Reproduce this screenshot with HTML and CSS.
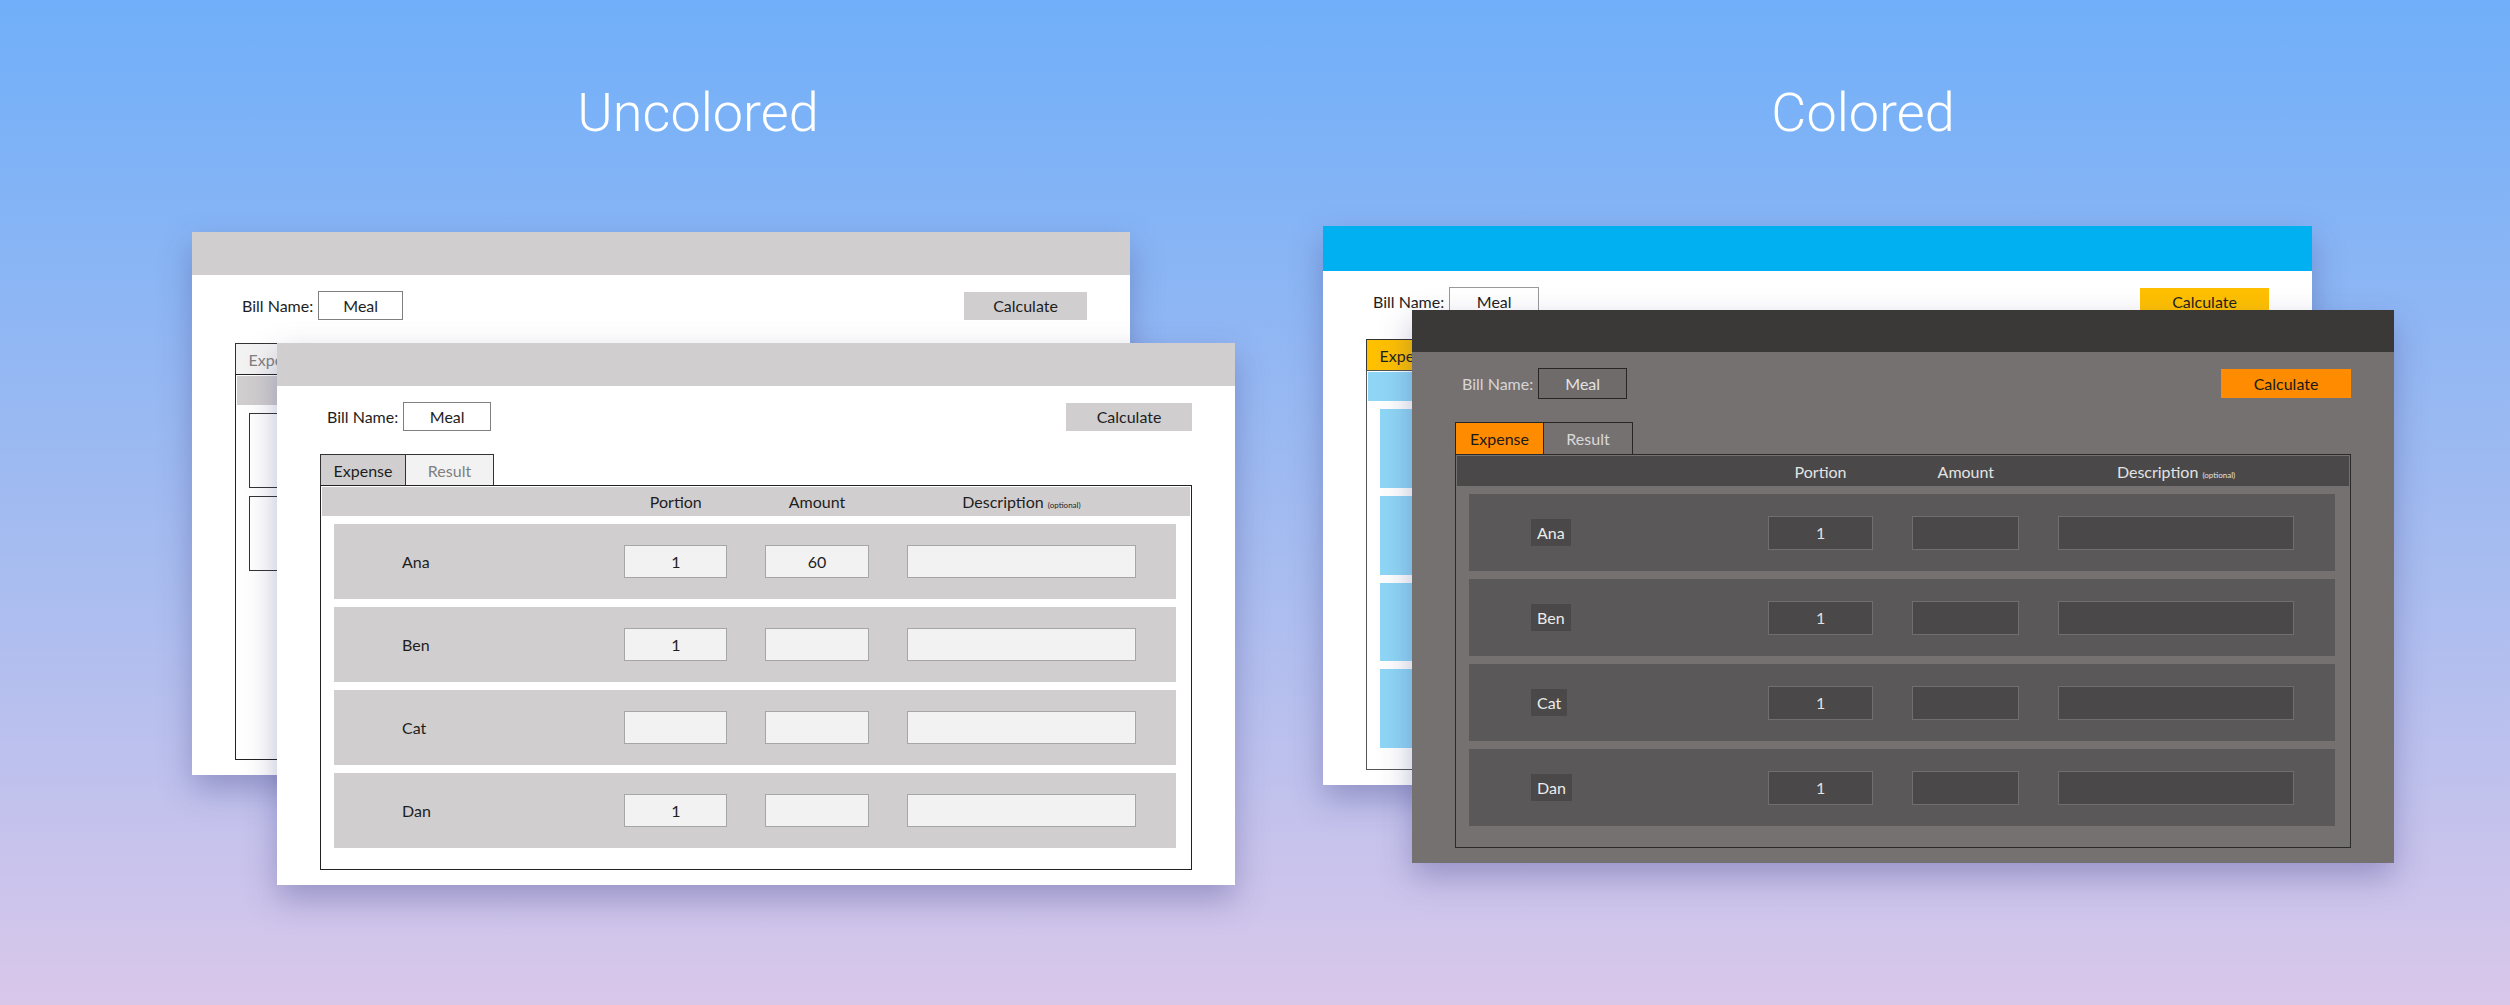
FILE: index.html
```html
<!DOCTYPE html>
<html lang="en">
<head>
  <meta charset="UTF-8">
  <meta name="viewport" content="width=device-width, initial-scale=1.0">
  <title>Bill Splitter - Uncolored vs Colored</title>
  <link rel="stylesheet" href="styles.css">
</head>
<body>
  <div class="titles">
    <h1 class="title title-left">Uncolored</h1>
    <h1 class="title title-right">Colored</h1>
  </div>

  <!-- uncolored, back window -->
  <div class="win win-plain-back">
    <div class="win-bar"></div>
    <div class="win-body">
      <div class="bill-row">
        <div class="bill-field"><span class="bill-label">Bill Name:</span><span class="box bill-input">Meal</span></div>
        <button class="calc">Calculate</button>
      </div>
      <div class="tabs"><div class="tab active">Expense</div><div class="tab">Result</div></div>
      <div class="panel">
        <div class="grid panel-head"><span></span><span>Portion</span><span>Amount</span><span>Description <small>(optional)</small></span></div>
        <div class="rows">
          <div class="grid row"></div>
          <div class="grid row"></div>
        </div>
      </div>
    </div>
  </div>

  <!-- uncolored, front window -->
  <div class="win win-plain">
    <div class="win-bar"></div>
    <div class="win-body">
      <div class="bill-row">
        <div class="bill-field"><span class="bill-label">Bill Name:</span><span class="box bill-input">Meal</span></div>
        <button class="calc">Calculate</button>
      </div>
      <div class="tabs"><div class="tab active">Expense</div><div class="tab">Result</div></div>
      <div class="panel">
        <div class="grid panel-head"><span></span><span>Portion</span><span>Amount</span><span>Description <small>(optional)</small></span></div>
        <div class="rows">
          <div class="grid row"><span class="name"><span>Ana</span></span><span class="box cell">1</span><span class="box cell">60</span><span class="box cell"></span></div>
          <div class="grid row"><span class="name"><span>Ben</span></span><span class="box cell">1</span><span class="box cell"></span><span class="box cell"></span></div>
          <div class="grid row"><span class="name"><span>Cat</span></span><span class="box cell"></span><span class="box cell"></span><span class="box cell"></span></div>
          <div class="grid row"><span class="name"><span>Dan</span></span><span class="box cell">1</span><span class="box cell"></span><span class="box cell"></span></div>
        </div>
      </div>
    </div>
  </div>

  <!-- colored, back window -->
  <div class="win win-color-back">
    <div class="win-bar"></div>
    <div class="win-body">
      <div class="bill-row">
        <div class="bill-field"><span class="bill-label">Bill Name:</span><span class="box bill-input">Meal</span></div>
        <button class="calc">Calculate</button>
      </div>
      <div class="tabs"><div class="tab active">Expense</div><div class="tab">Result</div></div>
      <div class="panel">
        <div class="grid panel-head"><span></span><span>Portion</span><span>Amount</span><span>Description <small>(optional)</small></span></div>
        <div class="rows">
          <div class="grid row"></div>
          <div class="grid row"></div>
          <div class="grid row"></div>
          <div class="grid row"></div>
        </div>
      </div>
    </div>
  </div>

  <!-- colored, front (dark) window -->
  <div class="win win-dark">
    <div class="win-bar"></div>
    <div class="win-body">
      <div class="bill-row">
        <div class="bill-field"><span class="bill-label">Bill Name:</span><span class="box bill-input">Meal</span></div>
        <button class="calc">Calculate</button>
      </div>
      <div class="tabs"><div class="tab active">Expense</div><div class="tab">Result</div></div>
      <div class="panel">
        <div class="grid panel-head"><span></span><span>Portion</span><span>Amount</span><span>Description <small>(optional)</small></span></div>
        <div class="rows">
          <div class="grid row"><span class="name"><span>Ana</span></span><span class="box cell">1</span><span class="box cell"></span><span class="box cell"></span></div>
          <div class="grid row"><span class="name"><span>Ben</span></span><span class="box cell">1</span><span class="box cell"></span><span class="box cell"></span></div>
          <div class="grid row"><span class="name"><span>Cat</span></span><span class="box cell">1</span><span class="box cell"></span><span class="box cell"></span></div>
          <div class="grid row"><span class="name"><span>Dan</span></span><span class="box cell">1</span><span class="box cell"></span><span class="box cell"></span></div>
        </div>
      </div>
    </div>
  </div>
</body>
</html>
```

FILE: styles.css
```css
body { margin: 0; width: 2510px; height: 1005px; overflow: hidden; position: relative; background: linear-gradient(#70aff9, #a6bcf0 55%, #d9c7ea); font-family: Lato, "Open Sans", sans-serif; font-size: 16px; color: #1e1e1e; }

/* headings */
.titles { display: flex; padding-top: 86px; }
.title { margin: 0; font: 300 54px/54px Roboto, "Open Sans", sans-serif; color: #fff; text-align: center; }
.title-left { width: 1396px; }
.title-right { width: 934px; }

/* window frame */
.win { position: absolute; display: flex; flex-direction: column; background: #fff; box-shadow: 0 14px 30px rgba(60, 60, 130, 0.35); }
.win-plain-back { left: 192px; top: 232px; width: 938px; height: 543px; }
.win-plain { left: 277px; top: 343px; width: 958px; height: 542px; }
.win-color-back { left: 1323px; top: 226px; width: 989px; height: 559px; }
.win-dark { left: 1412px; top: 310px; width: 982px; height: 553px; }

.win-bar { height: 43px; flex-shrink: 0; background: #d0cece; }
.win-body { flex: 1; display: flex; flex-direction: column; padding: 16px 43px 15px; min-height: 0; }

/* bill name + calculate */
.bill-row { display: flex; justify-content: space-between; align-items: center; height: 29px; }
.bill-field { display: flex; align-items: center; gap: 5px; padding-left: 7px; }
.box { display: flex; align-items: center; justify-content: center; box-sizing: border-box; border: 1px solid #a6a6a6; }
.bill-input { width: 88px; height: 29px; background: #fff; border-color: #7f7f7f; }
.calc { width: 126px; height: 28px; border: 0; padding: 0; font: inherit; color: #1e1e1e; background: #d0cece; }

/* tabs + panel */
.tabs { display: flex; margin-top: 23px; }
.tab { width: 86px; height: 31px; box-sizing: border-box; display: flex; align-items: center; justify-content: center; border: 1px solid #333; border-bottom: 0; background: #f2f2f2; color: #7f7f7f; }
.tab + .tab { width: 88px; border-left: 0; }
.tab.active { background: #d0cece; color: #1e1e1e; }

.panel { flex: 1; display: flex; flex-direction: column; min-height: 0; border: 1px solid #222; padding: 1px 1px 21px; }
.grid { display: grid; grid-template-columns: 30% 12.2% 12.35% 27.2%; column-gap: 4.5%; align-items: center; }
.panel-head { height: 29px; flex-shrink: 0; padding: 0 14px 0 12px; background: #d0cece; }
.panel-head span { text-align: center; }
.panel-head small { font-size: 8px; }

.rows { flex: 1; display: flex; flex-direction: column; gap: 8px; padding: 8px 14px 0 12px; }
.row { flex: 1; background: #d0cece; }
.name { padding-left: 62px; }
.name span { display: inline-block; padding: 4px 6px; }
.cell { height: 33px; background: #f2f2f2; }

/* uncolored back window: older outline style */
.win-plain-back .bill-input { width: 85px; }
.win-plain-back .calc { width: 123px; }
.win-plain-back .tab.active { background: #f2f2f2; color: #7f7f7f; }
.win-plain-back .row { flex: 0 0 75px; box-sizing: border-box; background: #fff; border: 1px solid #333; }

/* colored back window */
.win-color-back .win-bar { height: 45px; background: #00b0f0; }
.win-color-back .bill-input { width: 90px; border-color: #999; }
.win-color-back .calc { width: 129px; background: #ffc000; }
.win-color-back .tab.active { background: #ffc000; color: #1e1e1e; }
.win-color-back .panel { border-color: #555; }
.win-color-back .panel-head,
.win-color-back .row { background: #8fd6f6; }

/* colored front window: dark theme */
.win-dark { background: #767171; color: #e3e3e3; }
.win-dark .win-bar { height: 42px; background: #3b3838; }
.win-dark .bill-row { height: 31px; }
.win-dark .bill-label { color: #d6d6d6; }
.win-dark .bill-input { width: 89px; height: 31px; background: #6f6b6a; border-color: #262626; color: #e3e3e3; }
.win-dark .calc { width: 130px; height: 29px; background: #ff8c00; color: #1a1a1a; }
.win-dark .tab { width: 89px; height: 32px; border-color: #262626; background: #767171; color: #d9d9d9; }
.win-dark .tab.active { background: #ff8c00; color: #1a1a1a; }
.win-dark .panel { border-color: #2a2a2a; }
.win-dark .panel-head { height: 30px; background: #4a4848; }
.win-dark .row { background: #5a5858; }
.win-dark .name span { background: #4a4848; color: #ececec; }
.win-dark .cell { height: 34px; background: #4a4848; border-color: #716e6e; color: #e3e3e3; }
```
